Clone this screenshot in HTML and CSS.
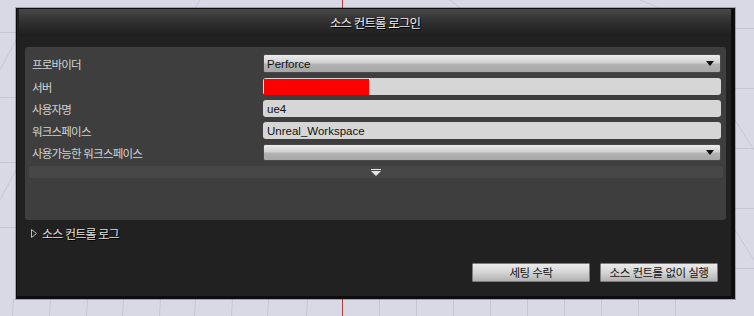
FILE: index.html
```html
<!DOCTYPE html>
<html lang="ko">
<head>
  <meta charset="UTF-8">
  <title>소스 컨트롤 로그인</title>
  <link rel="stylesheet" href="styles.css">
</head>
<body>

  <!-- viewport grid behind the dialog -->
  <svg class="backdrop" width="754" height="316" viewBox="0 0 754 316">
    <g stroke="#c6c6d6" stroke-width="1">
      <line x1="0" y1="32.5" x2="16" y2="32.5"/>
      <line x1="0" y1="97.5" x2="16" y2="97.5"/>
      <line x1="0" y1="162.5" x2="16" y2="162.5"/>
      <line x1="0" y1="227.5" x2="16" y2="227.5"/>
      <line x1="735" y1="28.5" x2="754" y2="28.5"/>
      <line x1="735" y1="88.5" x2="754" y2="88.5"/>
      <line x1="735" y1="148.5" x2="754" y2="148.5"/>
      <line x1="735" y1="208.5" x2="754" y2="208.5"/>
      <line x1="735" y1="268.5" x2="754" y2="268.5"/>
      <line x1="13.5" y1="299" x2="12.5" y2="316"/>
      <line x1="50.5" y1="299" x2="49.5" y2="316"/>
      <line x1="87.5" y1="299" x2="86.5" y2="316"/>
      <line x1="123.5" y1="299" x2="122.5" y2="316"/>
      <line x1="160.5" y1="299" x2="159.5" y2="316"/>
      <line x1="195.5" y1="299" x2="194.5" y2="316"/>
      <line x1="232.5" y1="299" x2="231.5" y2="316"/>
      <line x1="268.5" y1="299" x2="267.5" y2="316"/>
      <line x1="307.5" y1="299" x2="306.5" y2="316"/>
      <line x1="379.5" y1="299" x2="379.5" y2="316"/>
      <line x1="416.5" y1="299" x2="416.5" y2="316"/>
      <line x1="453.5" y1="299" x2="453.5" y2="316"/>
      <line x1="490.5" y1="299" x2="490.5" y2="316"/>
      <line x1="527.5" y1="299" x2="527.5" y2="316"/>
      <line x1="564.5" y1="299" x2="564.5" y2="316"/>
      <line x1="601.5" y1="299" x2="601.5" y2="316"/>
      <line x1="638.5" y1="299" x2="638.5" y2="316"/>
      <line x1="675.5" y1="299" x2="675.5" y2="316"/>
      <line x1="0" y1="200" x2="16" y2="170"/>
      <line x1="0" y1="70" x2="16" y2="40"/>
      <line x1="735" y1="120" x2="754" y2="150"/>
      <line x1="735" y1="230" x2="754" y2="260"/>
      <line x1="640" y1="0" x2="660" y2="8"/>
      <line x1="450" y1="0" x2="460" y2="8"/>
      <line x1="200" y1="0" x2="195" y2="8"/>
    </g>
    <line x1="342.5" y1="0" x2="342.5" y2="8" stroke="#b04040"/>
    <line x1="342.5" y1="299" x2="342.5" y2="316" stroke="#b04040"/>
  </svg>

  <div class="window">
    <div class="titlebar">소스 컨트롤 로그인</div>

    <div class="panel">
      <div class="row">
        <div class="label">프로바이더</div>
        <div class="combo tall"><span class="value">Perforce</span><span class="arrow"></span></div>
      </div>
      <div class="row">
        <div class="label">서버</div>
        <div class="field"><span class="redacted"></span></div>
      </div>
      <div class="row">
        <div class="label">사용자명</div>
        <div class="field"><span class="value">ue4</span></div>
      </div>
      <div class="row">
        <div class="label">워크스페이스</div>
        <div class="field"><span class="value">Unreal_Workspace</span></div>
      </div>
      <div class="row">
        <div class="label">사용가능한 워크스페이스</div>
        <div class="combo"><span class="value"></span><span class="arrow"></span></div>
      </div>
      <div class="expander">
        <svg width="10" height="7" viewBox="0 0 10 7">
          <rect x="0" y="0" width="10" height="1" fill="#e6e6e6"/>
          <polygon points="0,2 10,2 5,7" fill="#e6e6e6"/>
        </svg>
      </div>
    </div>

    <div class="log">
      <svg width="6" height="9" viewBox="0 0 6 9">
        <polygon points="0.5,0.5 5.5,4.5 0.5,8.5" fill="none" stroke="#bdbdbd"/>
      </svg>
      <span>소스 컨트롤 로그</span>
    </div>

    <div class="buttons">
      <button class="btn">세팅 수락</button>
      <button class="btn">소스 컨트롤 없이 실행</button>
    </div>
  </div>

</body>
</html>
```

FILE: styles.css
```css
body {
  margin: 0;
  width: 754px;
  height: 316px;
  overflow: hidden;
  background: #d9d9e6;
  font-family: "Noto Sans CJK KR", "Liberation Sans", sans-serif;
}

.backdrop {
  position: absolute;
  left: 0;
  top: 0;
}

.window {
  position: relative;
  box-sizing: border-box;
  width: 719px;
  height: 291px;
  margin: 8px 0 0 16px;
  border: 1px solid #0d0d0d;
  border-right-width: 4px;
  border-bottom-width: 3px;
  background: #212121;
  box-shadow: 0 0 0 1px rgba(0, 0, 0, 0.25);
  display: flex;
  flex-direction: column;
}

.titlebar {
  height: 27px;
  margin: 0 0 0 2px;
  background: linear-gradient(#474747, #2f2f2f 50%, #1e1e1e);
  color: #ececec;
  font-size: 12.5px;
  letter-spacing: -0.9px;
  line-height: 27px;
  text-align: center;
  text-shadow: 1px 1px 0 #000;
}

.panel {
  margin: 11px 5px 0 8px;
  height: 173px;
  box-sizing: border-box;
  padding: 7px 5px 0 7px;
  background: #3e3e3e;
  border-radius: 3px;
  display: flex;
  flex-direction: column;
  gap: 5px;
}

.row {
  display: flex;
  align-items: center;
}

.label {
  width: 231px;
  flex-shrink: 0;
  color: #d2d2d2;
  font-size: 11.5px;
  letter-spacing: -0.8px;
}

.field,
.combo {
  flex: 1;
  height: 17px;
  box-sizing: border-box;
  display: flex;
  align-items: center;
  color: #111;
  font-family: "Liberation Sans", sans-serif;
  font-size: 11.5px;
}

.field {
  background: #d6d6d6;
  border-radius: 3px;
  padding-left: 4px;
}

.combo {
  border: 1px solid #4a4a4a;
  border-radius: 2px;
  padding: 0 6px 0 3px;
  background: linear-gradient(#ececec, #d2d2d2 45%, #b3b3b3 55%, #a7a7a7);
  justify-content: space-between;
}

.combo.tall {
  height: 19px;
}

.arrow {
  width: 0;
  height: 0;
  border-left: 4px solid transparent;
  border-right: 4px solid transparent;
  border-top: 5px solid #111;
}

.redacted {
  width: 105px;
  height: 16px;
  margin-left: -3px;
  background: #ff0000;
}

.expander {
  height: 12px;
  margin: 0 -2px 0 -3px;
  background: #474747;
  display: flex;
  justify-content: center;
  align-items: center;
}

.log {
  margin: 5px 0 0 14px;
  display: flex;
  align-items: center;
  gap: 5px;
  color: #e0e0e0;
  font-size: 12px;
  letter-spacing: -0.8px;
  text-shadow: 1px 1px 0 #000;
}

.buttons {
  margin: 21px 13px 0 0;
  display: flex;
  justify-content: flex-end;
  gap: 10px;
}

.btn {
  width: 118px;
  height: 19px;
  padding: 0;
  border: 1px solid #7c7c7c;
  border-radius: 1px;
  background: linear-gradient(#ececec, #d4d4d4 50%, #b2b2b2);
  color: #111;
  font-family: "Noto Sans CJK KR", sans-serif;
  font-size: 11.5px;
  letter-spacing: -0.5px;
  line-height: 17px;
}
```
